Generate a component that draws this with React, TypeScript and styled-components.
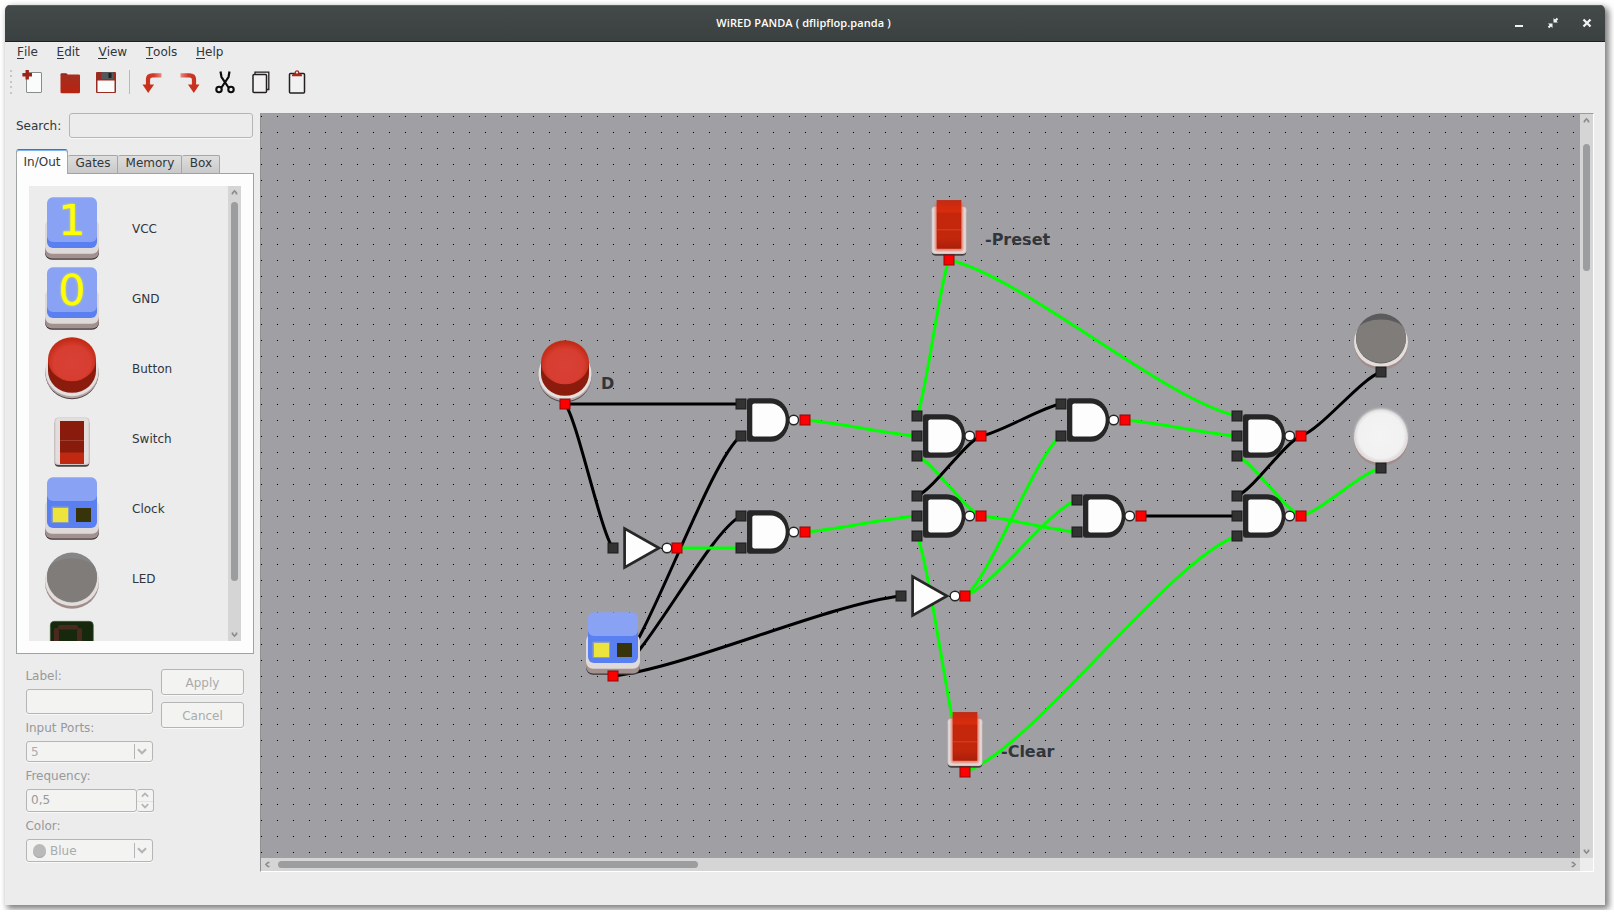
import React from "react";
import styled, { createGlobalStyle, css } from "styled-components";

const GlobalStyle = createGlobalStyle`
  * { box-sizing: border-box; }
  body { margin: 0; background: #fff; overflow: hidden; }
  body, input, button { font-family: "DejaVu Sans", sans-serif; font-size: 12px; line-height: 16px; color: #31363b; }
`;

const Window = styled.div`
  width: 1600px;
  height: 900px;
  margin: 5px;
  display: flex;
  flex-direction: column;
  background: #ececec;
  border-radius: 5px 5px 0 0;
  box-shadow: 3px 3px 6px 1px rgba(0, 0, 0, 0.5);
  overflow: hidden;
`;

const TitleBar = styled.header`
  height: 37px;
  flex: none;
  display: grid;
  grid-template-columns: 1fr auto 1fr;
  align-items: center;
  background: linear-gradient(#434a49, #3a4140);
  border-bottom: 1px solid #1c2021;
  box-shadow: inset 0 1px #596160;
`;

const Title = styled.h1`
  grid-column: 2;
  margin: 0 3px 0 0;
  font: 600 11px/16px "Open Sans", sans-serif;
  letter-spacing: 0.08px;
  color: #fff;
  white-space: pre;
`;

const WindowButtons = styled.div`
  justify-self: end;
  display: flex;
  gap: 22px;
  padding-right: 12px;
  svg { display: block; }
`;

const MenuBar = styled.nav`
  display: flex;
  gap: 18.6px;
  padding: 2px 12px 0;
  height: 24px;
  flex: none;
`;

const MenuItem = styled.span`
  line-height: 16px;
`;

const Mnemonic = styled.span`
  display: inline-block;
  height: 15px;
  border-bottom: 1px solid #31363b;
`;

const ToolBar = styled.div`
  height: 47px;
  flex: none;
  display: flex;
  align-items: flex-start;
  gap: 12px;
  padding: 4px 0 0 5px;
  svg { display: block; flex: none; }
`;

const Grip = styled.div`
  width: 2px;
  height: 24px;
  margin-right: -2px;
  background: repeating-linear-gradient(#c6c6c6 0 2px, transparent 2px 5.5px);
`;

const ToolSeparator = styled.div`
  width: 1px;
  height: 24px;
  margin: 0 -1px 0 -1px;
  background: #b9b9b9;
`;

const Workspace = styled.main`
  flex: none;
  height: 759px;
  display: flex;
  gap: 6px;
  padding: 0 11px;
`;

const Sidebar = styled.aside`
  width: 238px;
  flex: none;
  display: flex;
  flex-direction: column;
`;

const SearchRow = styled.label`
  display: flex;
  align-items: center;
  justify-content: space-between;
  margin-right: 1px;
`;

const fieldFrame = css`
  border: 1px solid #b4b6b6;
  border-radius: 3px;
  box-shadow: 0 1px #f8f8f8;
`;

const SearchInput = styled.input`
  ${fieldFrame}
  width: 184px;
  height: 25px;
  background: #ececec;
  outline: none;
`;

const Tabs = styled.div`
  display: flex;
  align-items: flex-end;
  height: 24px;
  margin-top: 11px;
`;

const Tab = styled.div<{ $active?: boolean; $w: number }>`
  width: ${(p) => p.$w}px;
  text-align: center;
  border: 1px solid #a3a7a7;
  ${(p) =>
    p.$active
      ? css`
          height: 25px;
          margin-bottom: -1px;
          padding-top: 4px;
          background: #fdfdfd;
          border-bottom: 0;
          border-top: 1px solid #3778c0;
          border-radius: 3px 3px 0 0;
          box-shadow: inset 0 1px #7db5ee;
          position: relative;
        `
      : css`
          height: 18px;
          padding-left: 1px;
          border-bottom: 0;
          border-left-width: 0;
          border-radius: 2px 2px 0 0;
          background: linear-gradient(#dedede, #c9c9c9);
          line-height: 14px;
        `}
`;

const TabPane = styled.section`
  height: 481px;
  padding: 12px;
  background: #fdfdfd;
  border: 1px solid #9fa3a4;
  display: flex;
`;

const List = styled.div`
  flex: 1;
  height: 455px;
  overflow: hidden;
  background: #ececec;
  padding: 8px 0 0 11px;
`;

const ListRow = styled.div`
  height: 70px;
  display: flex;
  align-items: center;
  gap: 28px;
  svg { display: block; flex: none; overflow: visible; }
`;

const ScrollTrack = styled.div<{ $horizontal?: boolean }>`
  flex: none;
  background: #d5d5d5;
  display: flex;
  align-items: center;
  justify-content: space-between;
  svg { display: block; flex: none; }
  ${(p) =>
    p.$horizontal
      ? css`height: 13px; flex: 1; flex-direction: row;`
      : css`width: 13px; flex-direction: column;`}
`;

const Thumb = styled.div<{ $length: number; $gap: number; $horizontal?: boolean }>`
  background: #9c9d9e;
  border-radius: 4px;
  ${(p) =>
    p.$horizontal
      ? css`width: ${p.$length}px; height: 7px; margin: 0 auto 0 ${p.$gap}px;`
      : css`height: ${p.$length}px; width: 7px; margin: ${p.$gap}px 0 auto;`}
`;

const Properties = styled.form`
  display: grid;
  grid-template-columns: 127px 83px;
  column-gap: 8px;
  padding: 14px 0 0 10px;
  color: #97999b;
`;

const Fields = styled.div`
  display: flex;
  flex-direction: column;
  gap: 6px;
`;

const Field = styled.div`
  display: flex;
  flex-direction: column;
  gap: 5px;
`;

const FieldName = styled.span`
  margin-left: -0.6px;
`;

const Box = styled.div<{ $h: number }>`
  ${fieldFrame}
  height: ${(p) => p.$h}px;
  background: #f3f3f2;
  display: flex;
  align-items: center;
  gap: 4px;
  padding-left: 4px;
  color: #a9abab;
`;

const SpinValue = styled(Box)`
  color: #97999b;
  padding-bottom: 2px;
`;

const Chevron = styled.span`
  height: 15px;
  margin-left: auto;
  padding: 4px 5px 0 2px;
  border-left: 1px solid #b4b6b6;
  svg { display: block; }
`;

const Spin = styled.div`
  display: grid;
  grid-template-columns: 111px 17px;
`;

const SpinButtons = styled.div`
  ${fieldFrame}
  border-left-width: 0;
  background: linear-gradient(#f3f3f2 11px, #e2e2e2 11px 12px, #f3f3f2 12px);
  display: flex;
  flex-direction: column;
  align-items: center;
  justify-content: space-around;
  svg { display: block; }
`;

const ColorDot = styled.span`
  width: 13px;
  height: 14px;
  margin-left: 2px;
  border-radius: 50%;
  background: #bababa;
  box-shadow: inset 0 -1px #a9a9a9;
`;

const Actions = styled.div`
  display: flex;
  flex-direction: column;
  gap: 7px;
  padding-top: 1px;
`;

const Action = styled.button`
  ${fieldFrame}
  height: 26px;
  padding: 1px 0 0;
  background: #f3f3f2;
  color: #a9abab;
`;

const SceneFrame = styled.section`
  width: 1334px;
  display: grid;
  grid-template-columns: 1319px 13px;
  grid-template-rows: 744px 13px;
  background: #ececec;
  border: 1px solid;
  border-color: #9b9d9d #fff #fff #8f9191;
`;

const SceneSvg = styled.svg`
  display: block;
  background: #a09fa4;
`;

const SceneLabel = styled.text`
  font: bold 16px "DejaVu Sans", sans-serif;
  fill: #31363b;
`;

const Digit = styled.text`
  font: 43px "DejaVu Sans", sans-serif;
  fill: #ffff00;
  text-anchor: middle;
  filter: drop-shadow(0 0 1px #dfe860);
`;

/* ---------- component artwork, drawn on a 64x64 box ---------- */

const Base = () => (
  <>
    <rect x="5" y="25" width="54" height="37.7" rx="7" fill="#3d3436" />
    <rect x="5" y="24" width="54" height="37.5" rx="7" fill="#a39190" />
    <rect x="5" y="22" width="54" height="34.7" rx="7" fill="#dfdada" />
  </>
);

const Tile = ({ digit }: { digit: string }) => (
  <>
    <Base />
    <rect x="7" y="10" width="50" height="41" rx="6" fill="#597ff0" />
    <rect x="7" y="0.3" width="50" height="44.7" rx="6" fill="#8aa2f3" />
    <Digit x="32" y="38">{digit}</Digit>
  </>
);

const Clock = () => (
  <>
    <Base />
    <rect x="7" y="5" width="50" height="46" rx="6" fill="#597ff0" />
    <rect x="7" y="0.3" width="50" height="23.7" rx="6" fill="#8aa2f3" />
    <rect x="11.5" y="29.5" width="17.5" height="16.5" rx="1" fill="#9aa9a6" opacity="0.8" />
    <rect x="13" y="31" width="15" height="14" fill="#ece33d" />
    <rect x="36" y="31" width="15" height="14" fill="#37330b" />
  </>
);

const PushButton = () => (
  <>
    <ellipse cx="32" cy="36.5" rx="26.5" ry="25.8" fill="#4b4142" />
    <ellipse cx="32" cy="35.7" rx="26.7" ry="25.6" fill="#b5a6a5" />
    <ellipse cx="32" cy="34" rx="26.5" ry="25.3" fill="#e4dfdf" />
    <path d="M8 22V34A24 21.8 0 0 0 56 34V22Z" fill="#8b1b0d" />
    <ellipse cx="32" cy="22.3" rx="24" ry="22" fill="url(#cap)" />
  </>
);

const SwitchBase = () => (
  <>
    <rect x="14.7" y="12.4" width="34.6" height="47.3" rx="4" fill="#4b4142" />
    <rect x="14.4" y="10.4" width="35.2" height="47.5" rx="4" fill="#cfc6c5" />
    <rect x="15.5" y="10.9" width="33" height="46" rx="3" fill="#e3dddd" />
  </>
);

const SwitchOff = () => (
  <>
    <SwitchBase />
    <rect x="20" y="14" width="24" height="32" fill="#891b0d" />
    <rect x="20" y="33" width="24" height="1" fill="#9d3f31" />
    <rect x="20" y="45.5" width="24" height="11.5" fill="#c02812" />
  </>
);

const SwitchOn = () => (
  <>
    <SwitchBase />
    <rect x="18" y="7" width="28" height="48" rx="2" fill="#f0644c" opacity="0.75" filter="url(#soft)" />
    <rect x="20" y="4.5" width="24" height="48" fill="url(#lever)" stroke="#b3230f" strokeWidth="0.6" />
    <rect x="20" y="4.5" width="24" height="12" fill="url(#leverTop)" />
    <rect x="20" y="33.3" width="24" height="1" fill="#d5432b" />
  </>
);

const LedBase = () => (
  <>
    <ellipse cx="32" cy="36" rx="27" ry="25.7" fill="#a08d8b" />
    <ellipse cx="32" cy="34" rx="27" ry="25" fill="#e3dddc" />
  </>
);

const Led = ({ rim = "#858687" }: { rim?: string }) => (
  <>
    <LedBase />
    <circle cx="32" cy="30.5" r="25" fill={rim} />
    <path d="M9 20A24 11.8 0 0 1 55 20A25 25 0 1 1 9 20Z" fill="#807c7a" />
  </>
);

const LedOn = () => (
  <>
    <circle cx="32" cy="31" r="26.5" fill="#fff" opacity="0.6" filter="url(#soft)" />
    <LedBase />
    <circle cx="32" cy="31.6" r="26.2" fill="url(#glow)" />
  </>
);

const SevenSegment = () => (
  <>
    <rect x="10.3" y="4.3" width="43" height="56" rx="4" fill="#16290c" stroke="#3c5a32" strokeWidth="0.6" />
    <g fill="#4a2a1e">
      <rect x="18" y="8" width="20" height="4.5" rx="2" />
      <rect x="14" y="11" width="5" height="20" rx="2" />
      <rect x="37" y="11" width="5" height="20" rx="2" />
    </g>
  </>
);

/* ---------- circuit ---------- */

type Pt = [number, number];

const wires: { from: Pt; to: Pt; on?: boolean }[] = [
  { from: [565, 404], to: [741, 404] },
  { from: [565, 404], to: [613, 548] },
  { from: [613, 676], to: [741, 436] },
  { from: [613, 676], to: [741, 516] },
  { from: [613, 676], to: [901, 596] },
  { from: [677, 548], to: [741, 548], on: true },
  { from: [805, 420], to: [917, 436], on: true },
  { from: [805, 532], to: [917, 516], on: true },
  { from: [949, 260], to: [917, 416], on: true },
  { from: [949, 260], to: [1237, 416], on: true },
  { from: [981, 516], to: [917, 456], on: true },
  { from: [981, 516], to: [1077, 532], on: true },
  { from: [981, 436], to: [917, 496] },
  { from: [981, 436], to: [1061, 404] },
  { from: [965, 596], to: [1061, 436], on: true },
  { from: [965, 596], to: [1077, 500], on: true },
  { from: [965, 772], to: [917, 536], on: true },
  { from: [965, 772], to: [1237, 536], on: true },
  { from: [1125, 420], to: [1237, 436], on: true },
  { from: [1141, 516], to: [1237, 516] },
  { from: [1301, 516], to: [1237, 456], on: true },
  { from: [1301, 516], to: [1381, 468], on: true },
  { from: [1301, 436], to: [1237, 496] },
  { from: [1301, 436], to: [1381, 372] },
];

const wirePath = ([x1, y1]: Pt, [x2, y2]: Pt) => {
  const dx = x2 - x1;
  const dy = y2 - y1;
  return `M${x1} ${y1}C${x1 + dx * 0.25} ${y1 + dy * 0.1} ${x1 + dx * 0.75} ${y1 + dy * 0.9} ${x2} ${y2}`;
};

const nands: { x: number; y: number; inputs: number[] }[] = [
  { x: 741, y: 420, inputs: [-16, 16] },
  { x: 741, y: 532, inputs: [-16, 16] },
  { x: 917, y: 436, inputs: [-20, 0, 20] },
  { x: 917, y: 516, inputs: [-20, 0, 20] },
  { x: 1061, y: 420, inputs: [-16, 16] },
  { x: 1077, y: 516, inputs: [-16, 16] },
  { x: 1237, y: 436, inputs: [-20, 0, 20] },
  { x: 1237, y: 516, inputs: [-20, 0, 20] },
];

const Port = ({ x, y, out }: { x: number; y: number; out?: boolean }) => (
  <rect x={x - 5} y={y - 5} width="10" height="10" fill={out ? "#ff0000" : "#333333"} stroke={out ? "#8a0606" : "#181818"} strokeOpacity="0.8" strokeWidth="1.2" />
);

const Bubble = ({ x }: { x: number }) => (
  <circle cx={x} cy="0" r="4.8" fill="#fff" stroke="#262626" strokeWidth="1.4" />
);

const Nand = ({ x, y, inputs }: { x: number; y: number; inputs: number[] }) => (
  <g transform={`translate(${x} ${y})`}>
    <path d="M8.4-21.8H30A18.4 21.8 0 0 1 30 21.8H8.4Q6 21.8 6 19.4V-19.4Q6-21.8 8.4-21.8Z" fill="#262626" />
    <path d="M13.3-16.6H29.5A15.2 16.6 0 0 1 29.5 16.6H13.3Q11.3 16.6 11.3 14.6V-14.6Q11.3-16.6 13.3-16.6Z" fill="#fdfdfd" />
    <Bubble x={52.7} />
    {inputs.map((dy) => <Port key={dy} x={0} y={dy} />)}
    <Port x={64} y={0} out />
  </g>
);

const Not = ({ x, y }: { x: number; y: number }) => (
  <g transform={`translate(${x} ${y})`}>
    <path d="M11.6-19.4V19.4L46 0Z" fill="#fdfdfd" stroke="#262626" strokeWidth="2.7" />
    <Bubble x={54} />
    <Port x={0} y={0} />
    <Port x={64} y={0} out />
  </g>
);

const Placed = ({ x, y, out, children }: { x: number; y: number; out?: boolean; children: React.ReactNode }) => (
  <>
    <g transform={`translate(${x - 32} ${y - 64})`}>{children}</g>
    <Port x={x} y={y} out={out} />
  </>
);

const Circuit = () => (
  <SceneSvg width="1319" height="744" viewBox="261 114 1319 744">
    <defs>
      <pattern id="grid" x="261" y="116" width="16" height="16" patternUnits="userSpaceOnUse">
        <rect width="1" height="1" fill="#000" />
      </pattern>
      <filter id="soft" x="-30%" y="-30%" width="160%" height="160%"><feGaussianBlur stdDeviation="1.3" /></filter>
      <radialGradient id="cap" cx="0.5" cy="0.58" r="0.55">
        <stop offset="0" stopColor="#d94136" />
        <stop offset="0.7" stopColor="#d73d31" />
        <stop offset="1" stopColor="#c12a14" />
      </radialGradient>
      <linearGradient id="lever" x1="0" y1="0" x2="0" y2="1">
        <stop offset="0" stopColor="#c5270c" />
        <stop offset="0.8" stopColor="#c2260b" />
        <stop offset="1" stopColor="#a91f0a" />
      </linearGradient>
      <linearGradient id="leverTop" x1="0" y1="0" x2="0" y2="1">
        <stop offset="0" stopColor="#c52a12" />
        <stop offset="1" stopColor="#db2c0d" />
      </linearGradient>
      <radialGradient id="glow">
        <stop offset="0" stopColor="#f4f4f4" />
        <stop offset="0.87" stopColor="#f1f1f1" />
        <stop offset="1" stopColor="#dedbdc" />
      </radialGradient>
    </defs>
    <rect x="261" y="114" width="1319" height="744" fill="url(#grid)" />
    <g fill="none" strokeWidth="3">
      {wires.map((w, i) => <path key={i} d={wirePath(w.from, w.to)} stroke={w.on ? "#00ff00" : "#000"} />)}
    </g>
    <Placed x={565} y={404} out><PushButton /></Placed>
    <Placed x={613} y={676} out><Clock /></Placed>
    <Placed x={949} y={260} out><SwitchOn /></Placed>
    <Placed x={965} y={772} out><SwitchOn /></Placed>
    <Placed x={1381} y={372}><Led rim="#5b5b5e" /></Placed>
    <Placed x={1381} y={468}><LedOn /></Placed>
    {nands.map((n, i) => <Nand key={i} {...n} />)}
    <Not x={613} y={548} />
    <Not x={901} y={596} />
    <SceneLabel x="601" y="389">D</SceneLabel>
    <SceneLabel x="985" y="245">-Preset</SceneLabel>
    <SceneLabel x="1001" y="757">-Clear</SceneLabel>
  </SceneSvg>
);

/* ---------- small glyphs ---------- */

const Arrow = ({ dir, size = 13 }: { dir: 0 | 90 | 180 | 270; size?: number }) => (
  <svg width={size} height={size} viewBox="0 0 13 13">
    <path d="M4.5 8.5V7L6.5 5L8.5 7V8.5" transform={`rotate(${dir} 6.5 6.5)`} fill="none" stroke="#8a8c8c" strokeWidth="1.7" />
  </svg>
);

const Caret = ({ up, small }: { up?: boolean; small?: boolean }) => (
  <svg width={small ? 8 : 10} height={small ? 6 : 7} viewBox="0 0 10 7">
    <path d={up ? "M1 5.5L5 1.7L9 5.5" : "M1 1.3L5 5.3L9 1.3"} fill="none" stroke="#b4b6b6" strokeWidth="2.2" />
  </svg>
);

const ToolIcon = ({ children }: { children: React.ReactNode }) => (
  <svg width="24" height="24" viewBox="0 0 24 24">{children}</svg>
);

const menus = ["File", "Edit", "View", "Tools", "Help"];

const parts: [string, React.ReactNode][] = [
  ["VCC", <Tile digit="1" />],
  ["GND", <Tile digit="0" />],
  ["Button", <PushButton />],
  ["Switch", <SwitchOff />],
  ["Clock", <Clock />],
  ["LED", <Led />],
  ["", <SevenSegment />],
];

export default function App() {
  return (
    <>
      <GlobalStyle />
      <Window>
        <TitleBar>
          <Title>WiRED PANDA ( dflipflop.panda )</Title>
          <WindowButtons>
            <svg width="12" height="12" viewBox="0 0 12 12"><rect x="2" y="8" width="8" height="2" fill="#f2f2f2" /></svg>
            <svg width="12" height="12" viewBox="0 0 12 12" fill="#f2f2f2" stroke="#f2f2f2">
              <path d="M6.5 1V5.5H11ZM5.5 11V6.5H1Z" stroke="none" />
              <path d="M7.5 4.5L10.5 1.5M4.5 7.5L1.5 10.5" strokeWidth="2" />
            </svg>
            <svg width="12" height="12" viewBox="0 0 12 12"><path d="M2.5 2.5L9.5 9.5M9.5 2.5L2.5 9.5" stroke="#f2f2f2" strokeWidth="2.3" /></svg>
          </WindowButtons>
        </TitleBar>
        <MenuBar>
          {menus.map((m) => <MenuItem key={m}><Mnemonic>{m[0]}</Mnemonic>{m.slice(1)}</MenuItem>)}
        </MenuBar>
        <ToolBar>
          <Grip />
          <ToolIcon>
            <rect x="4.5" y="2.5" width="15" height="20" rx="0.5" fill="#fafcfc" stroke="#8b8d8d" />
            <path d="M5.2 0V9.5M0.4 4.7H10" stroke="#9b2418" strokeWidth="3.4" />
          </ToolIcon>
          <ToolIcon>
            <path d="M2.5 5V4.5Q2.5 3.2 4 3.2H8Q9.3 3.2 9.6 5Z" fill="#8f1f12" />
            <rect x="2.5" y="4.4" width="19.5" height="18.8" rx="1.2" fill="url(#folder)" />
            <defs><linearGradient id="folder" x1="0" y1="0" x2="0" y2="1"><stop offset="0" stopColor="#a32e20" /><stop offset="1" stopColor="#b92310" /></linearGradient></defs>
          </ToolIcon>
          <ToolIcon>
            <rect x="2" y="2" width="20" height="21" rx="1" fill="#9b2b20" />
            <rect x="3.5" y="10.5" width="17" height="11.5" fill="#fafcfc" />
            <rect x="7.5" y="2" width="12" height="7" fill="#55585a" />
            <rect x="14.5" y="3" width="3" height="5" fill="#1e2020" />
          </ToolIcon>
          <ToolSeparator />
          <ToolIcon>
            <path d="M20.5 5.3H11.5Q7 5.3 7 9.5V16" fill="none" stroke="url(#arrow)" strokeWidth="4.2" />
            <path d="M1.5 14.5H13L7.2 23Z" fill="#c8301c" />
            <defs><linearGradient id="arrow" x1="5" y1="0" x2="21" y2="0" gradientUnits="userSpaceOnUse"><stop offset="0" stopColor="#c8301c" /><stop offset="0.5" stopColor="#d03c2c" /><stop offset="1" stopColor="#e88f85" /></linearGradient></defs>
          </ToolIcon>
          <ToolIcon>
            <g transform="translate(24 0) scale(-1 1)">
              <path d="M20.5 5.3H11.5Q7 5.3 7 9.5V16" fill="none" stroke="url(#arrow)" strokeWidth="4.2" />
              <path d="M1.5 14.5H13L7.2 23Z" fill="#c8301c" />
            </g>
          </ToolIcon>
          <ToolIcon>
            <path d="M7.5 1.5L8.5 7L15.5 17.5M16.5 1.5L15.5 7L8.5 17.5" fill="none" stroke="#0c0c0c" strokeWidth="2.2" />
            <circle cx="6" cy="19.5" r="2.7" fill="none" stroke="#0c0c0c" strokeWidth="2.1" />
            <circle cx="18" cy="19.5" r="2.7" fill="none" stroke="#0c0c0c" strokeWidth="2.1" />
          </ToolIcon>
          <ToolIcon>
            <path d="M6 4V2.2H19.8V19.5H18" fill="none" stroke="#231f20" strokeWidth="1.3" />
            <rect x="4" y="4.5" width="13.5" height="18" rx="1" fill="#f1f1f1" stroke="#231f20" strokeWidth="1.5" />
          </ToolIcon>
          <ToolIcon>
            <rect x="4.5" y="3.5" width="15" height="19.5" rx="1" fill="#f1f1f1" stroke="#231f20" strokeWidth="1.5" />
            <path d="M7 6.3V4.8L9.5 3.2H14.5L17 4.8V6.3Z" fill="#a8281b" />
            <circle cx="12" cy="2.6" r="1.7" fill="#ececec" stroke="#a8281b" strokeWidth="1.3" />
          </ToolIcon>
        </ToolBar>
        <Workspace>
          <Sidebar>
            <SearchRow>Search:<SearchInput /></SearchRow>
            <Tabs>
              <Tab $active $w={52}>In/Out</Tab>
              <Tab $w={50}>Gates</Tab>
              <Tab $w={64}>Memory</Tab>
              <Tab $w={38}>Box</Tab>
            </Tabs>
            <TabPane>
              <List>
                {parts.map(([name, art]) => (
                  <ListRow key={name}>
                    <svg width="64" height="64" viewBox="0 0 64 64">{art}</svg>
                    {name}
                  </ListRow>
                ))}
              </List>
              <ScrollTrack>
                <Arrow dir={0} />
                <Thumb $length={379} $gap={3} />
                <Arrow dir={180} />
              </ScrollTrack>
            </TabPane>
            <Properties>
              <Fields>
                <Field><FieldName>Label:</FieldName><Box $h={25} /></Field>
                <Field><FieldName>Input Ports:</FieldName><Box $h={21}>5<Chevron><Caret /></Chevron></Box></Field>
                <Field>
                  <FieldName>Frequency:</FieldName>
                  <Spin>
                    <SpinValue $h={23}>0,5</SpinValue>
                    <SpinButtons><Caret up small /><Caret small /></SpinButtons>
                  </Spin>
                </Field>
                <Field><FieldName>Color:</FieldName><Box $h={23}><ColorDot />Blue<Chevron><Caret /></Chevron></Box></Field>
              </Fields>
              <Actions>
                <Action type="button">Apply</Action>
                <Action type="button">Cancel</Action>
              </Actions>
            </Properties>
          </Sidebar>
          <SceneFrame>
            <Circuit />
            <ScrollTrack>
              <Arrow dir={0} />
              <Thumb $length={127} $gap={17} />
              <Arrow dir={180} />
            </ScrollTrack>
            <ScrollTrack $horizontal>
              <Arrow dir={270} />
              <Thumb $horizontal $length={420} $gap={4} />
              <Arrow dir={90} />
            </ScrollTrack>
          </SceneFrame>
        </Workspace>
      </Window>
    </>
  );
}
